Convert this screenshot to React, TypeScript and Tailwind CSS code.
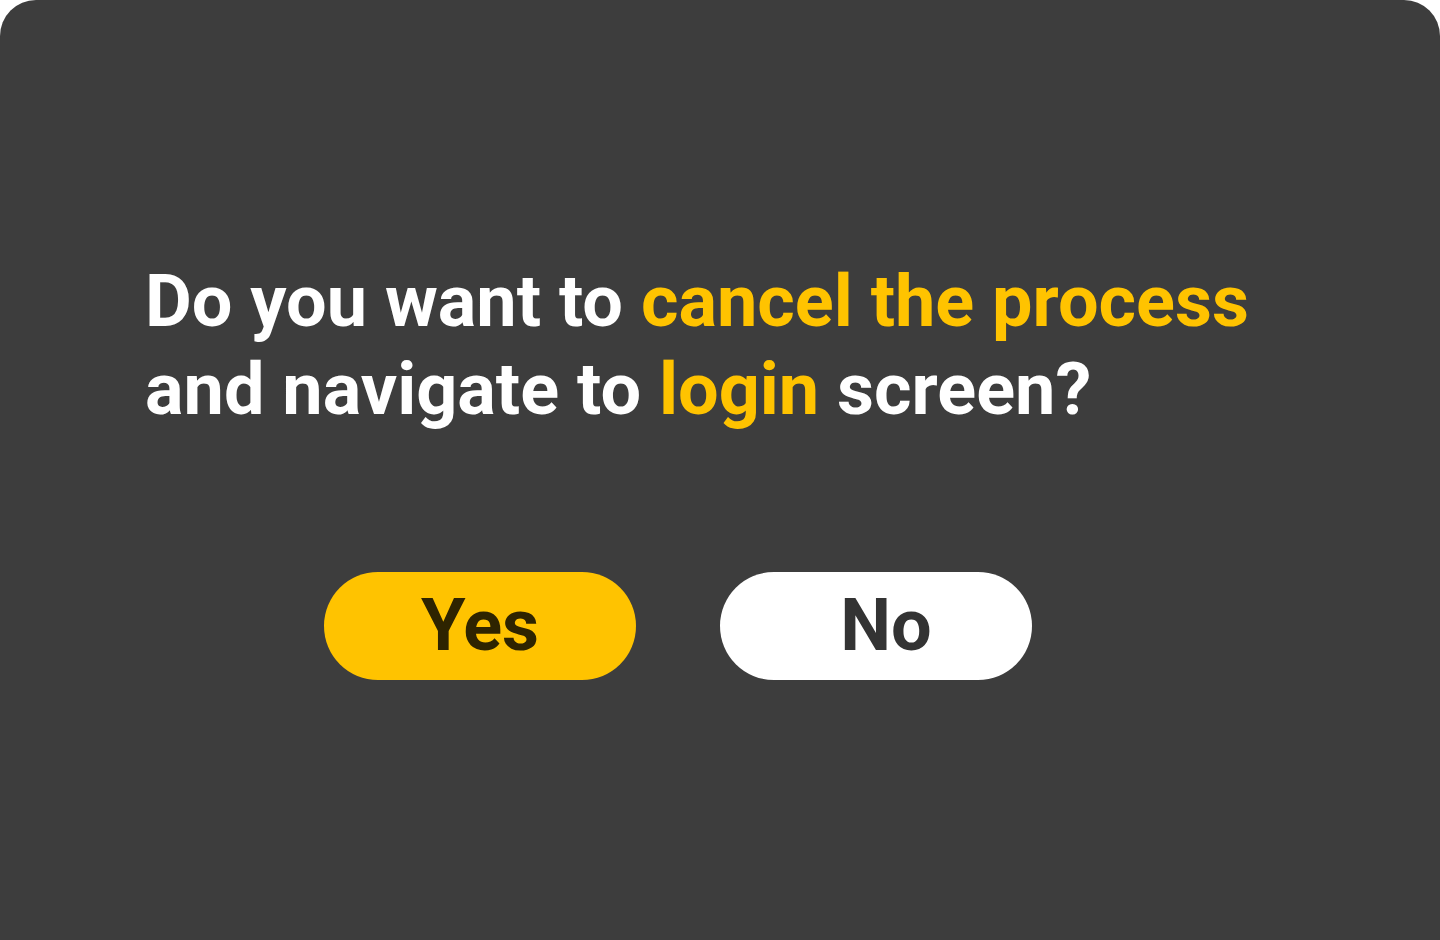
export default function App() {
  return (
    <div className="h-[940px] w-[1440px] bg-white" style={{ fontFamily: 'Roboto, sans-serif' }}>
      <div className="flex h-full flex-col rounded-t-[36px] bg-[#3d3d3d] px-[145px] pt-[258px]">
        <p className="text-[72px] font-bold leading-[88px] text-white">
          Do you want to <span className="text-[#ffc300]">cancel the process</span>
          <br />
          and navigate to <span className="text-[#ffc300]">login</span> screen?
        </p>
        <div className="mt-[138px] flex gap-[84px] pl-[179px]">
          <button className="flex h-[108px] w-[312px] items-center justify-center rounded-full bg-[#ffc300] text-[72px] font-bold text-[#2e2400]">
            Yes
          </button>
          <button className="flex h-[108px] w-[312px] items-center justify-center rounded-full bg-white pl-[20px] text-[72px] font-bold text-[#333333]">
            No
          </button>
        </div>
      </div>
    </div>
  )
}
